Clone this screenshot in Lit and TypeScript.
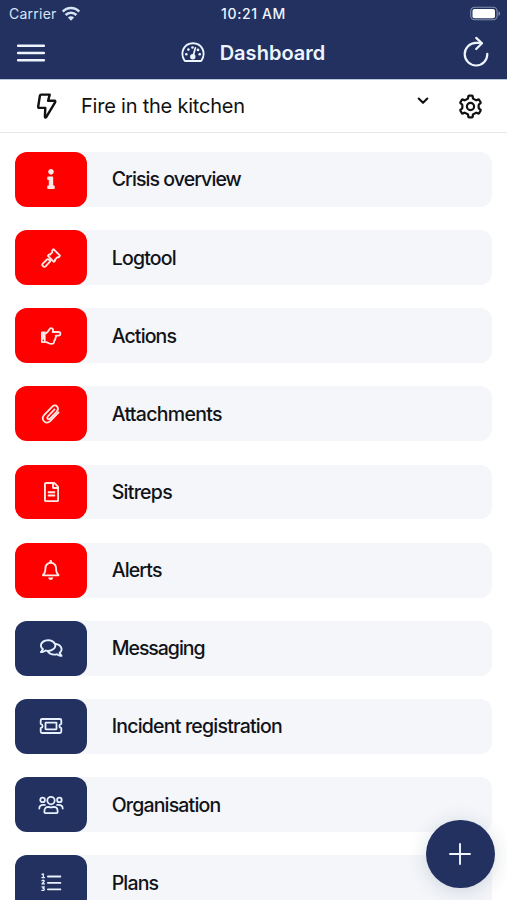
import { LitElement, html, css, svg } from "lit";
import { customElement } from "lit/decorators.js";
import { classMap } from "lit/directives/class-map.js";
import { styleMap } from "lit/directives/style-map.js";

const icons: Record<string, unknown> = {
  info: svg`<svg class="solid" width="8" height="20" viewBox="0 0 192 512"><path d="M20 424.229h20V279.771H20c-11.046 0-20-8.954-20-20V212c0-11.046 8.954-20 20-20h112c11.046 0 20 8.954 20 20v212.229h20c11.046 0 20 8.954 20 20V492c0 11.046-8.954 20-20 20H20c-11.046 0-20-8.954-20-20v-47.771c0-11.046 8.954-20 20-20zM96 0C56.235 0 24 32.235 24 72s32.235 72 72 72 72-32.235 72-72S135.764 0 96 0z"/></svg>`,
  gavel: svg`<svg class="line" width="24" height="24" viewBox="0 0 24 24"><path d="M14.500 3.200 21 9.700 19.600 11.300 18.500 11.100 16 13.700 16.200 14.700 14.900 15.900 8.900 9.800 10 8.500 11.100 8.600 13.400 6.100 13.100 4.800ZM11.100 12 12.900 13.900M9.600 13.400 11.400 15.200 6.600 20.300C4.900 21.800 2.200 19.400 3.800 17.600L8 13.500Q8.800 12.700 9.600 13.400ZM12 12.900 10.500 14.300"/></svg>`,
  hand: svg`<svg class="line" width="24" height="24" viewBox="0 0 24 24"><path d="M7 9.200C9.800 7.700 10.100 4.200 12 4.200 14.300 4.200 14.500 6 13.600 8H19.500C22 8 22 11.700 19.500 11.700H16.700C17.300 12.600 17 13.700 16.200 14.200 16.600 15.200 16.100 16.300 15.200 16.600 15.400 18.600 14.500 19.900 12.600 19.900 9.800 19.900 9.200 18.400 7 18.100"/><path class="fill" d="M2.800 7.600H6.600V18.900H2.800Q2 18.900 2 18V8.500Q2 7.600 2.800 7.600Z"/><circle class="dot-red" cx="4.300" cy="16.400" r=".8"/></svg>`,
  clip: svg`<svg class="line" width="24" height="24" viewBox="0 0 24 24"><path d="m15.500 7.400-6.700 7.100C7.300 16.400 9.300 18.300 11 16.600L17.800 9.500C20.800 6 17.200 1.200 13.300 4.600L5.300 12.900C1.300 17.200 6.600 23.500 11.200 19.100L19.600 10.400"/></svg>`,
  file: svg`<svg class="solid" width="15" height="20" viewBox="0 0 384 512"><path d="M288 248v28c0 6.600-5.400 12-12 12H108c-6.600 0-12-5.400-12-12v-28c0-6.600 5.400-12 12-12h168c6.600 0 12 5.400 12 12zm-12 72H108c-6.600 0-12 5.400-12 12v28c0 6.600 5.400 12 12 12h168c6.600 0 12-5.400 12-12v-28c0-6.600-5.400-12-12-12zm108-188.100V464c0 26.500-21.500 48-48 48H48c-26.500 0-48-21.500-48-48V48C0 21.500 21.500 0 48 0h204.100C264.800 0 277 5.100 286 14.100L369.900 98c9 8.900 14.100 21.200 14.100 33.900zm-128-80V128h76.100L256 51.900zM336 464V176H232c-13.300 0-24-10.700-24-24V48H48v416h288z"/></svg>`,
  bell: svg`<svg class="solid" width="17.500" height="20" viewBox="0 0 448 512"><path d="M439.390 362.290c-19.320-20.760-55.470-51.990-55.470-154.290 0-77.700-54.480-139.900-127.940-155.160V32c0-17.670-14.320-32-31.980-32s-31.980 14.330-31.980 32v20.840C118.560 68.100 64.080 130.300 64.080 208c0 102.300-36.150 133.530-55.470 154.290-6 6.450-8.660 14.160-8.610 21.710.11 16.400 12.980 32 32.100 32h383.800c19.120 0 32-15.600 32.100-32 .05-7.550-2.610-15.270-8.610-21.710zM67.530 368c21.220-27.970 44.420-74.330 44.530-159.420 0-.2-.06-.38-.06-.58 0-61.860 50.140-112 112-112s112 50.140 112 112c0 .2-.06.38-.06.58.11 85.100 23.310 131.460 44.530 159.420H67.530zM224 512c35.320 0 63.970-28.650 63.970-64H160.030c0 35.350 28.650 64 63.970 64z"/></svg>`,
  comments: svg`<svg class="solid" width="22.500" height="20" viewBox="0 0 576 512"><path d="M532 386.200c27.500-27.100 44-61.100 44-98.200 0-80-76.500-146.100-176.200-157.900C368.300 72.500 294.300 32 208 32 93.100 32 0 103.600 0 192c0 37 16.500 71 44 98.200-15.300 30.700-37.300 54.500-37.700 54.900-6.300 6.700-8.100 16.500-4.400 25 3.600 8.500 12 14 21.200 14 53.500 0 96.700-20.200 125.200-38.800 9.200 2.100 18.700 3.700 28.400 4.900C208.100 407.600 281.800 448 368 448c20.800 0 40.800-2.400 59.800-6.800C456.300 459.700 499.400 480 553 480c9.200 0 17.500-5.500 21.200-14 3.600-8.500 1.900-18.300-4.400-25-.4-.3-22.500-24.100-37.800-54.800zm-392.800-92.300L122.100 305c-14.100 9.100-28.500 16.300-43.100 21.400 2.700-4.700 5.400-9.700 8-14.800l15.500-31.100L77.700 256C64.200 242.600 48 220.700 48 192c0-60.700 73.300-112 160-112s160 51.300 160 112-73.300 112-160 112c-16.500 0-33-1.900-49-5.600l-19.800-4.500zM498.300 352l-24.700 24.400 15.500 31.100c2.600 5.100 5.300 10.100 8 14.800-14.600-5.100-29-12.300-43.100-21.400l-17.100-11.100-19.900 4.600c-16 3.700-32.500 5.600-49 5.600-54 0-102.200-20.100-131.300-49.700C338 339.500 416 272.900 416 192c0-3.400-.4-6.700-.7-10C479.700 196.500 528 238.800 528 288c0 28.700-16.200 50.600-29.700 64z"/></svg>`,
  ticket: svg`<svg class="line" width="24" height="24" viewBox="0 0 24 24"><path d="M3.100 5H20.900Q22.300 5 22.300 6.500V9.800C19.800 10.600 19.800 13.400 22.300 14.200V17.500Q22.300 19 20.900 19H3.100Q1.700 19 1.700 17.500V14.200C4.200 13.400 4.200 10.600 1.700 9.800V6.500Q1.700 5 3.100 5Z"/><rect x="6.500" y="8.700" width="11" height="6.600" rx=".5"/></svg>`,
  users: svg`<svg class="line" width="26" height="24" viewBox="0 0 26 24"><circle cx="13" cy="7.600" r="3.700"/><circle cx="4.600" cy="6.900" r="2.300"/><circle cx="21.400" cy="6.900" r="2.300"/><path d="M6.400 19.200V18C6.400 15.300 8.200 13.800 10.400 13.800 12 14.400 14 14.400 15.600 13.800 17.800 13.800 19.600 15.300 19.600 18V19.200Q19.600 20.100 18.600 20.100H7.400Q6.400 20.100 6.400 19.200ZM1.300 15.500C1.300 13 2.700 11.900 5.400 11.900H6.900M24.700 15.500C24.700 13 23.300 11.900 20.600 11.900H19.100"/></svg>`,
  list: svg`<svg class="line" width="24" height="24" viewBox="0 0 24 24"><path d="M8.900 5.500H21.400M8.900 11.900H21.400M8.900 18.300H21.400"/><path class="thin" d="M3.100 3.400 4.300 2.900V6.500M2.900 6.600H5.500M2.900 9.700C4.800 8.600 6 9.800 4.500 11.200L3 12.900H5.500M3 15.900H5.300L4 17.300C6.100 17.200 5.800 20.200 2.800 19.300"/></svg>`,
};

const rows = [
  { icon: "info", label: "Crisis overview", alert: true, tracking: -0.93 },
  { icon: "gavel", label: "Logtool", alert: true, tracking: -0.8 },
  { icon: "hand", label: "Actions", alert: true, tracking: -0.87 },
  { icon: "clip", label: "Attachments", alert: true, tracking: -0.7 },
  { icon: "file", label: "Sitreps", alert: true, tracking: -0.73 },
  { icon: "bell", label: "Alerts", alert: true, tracking: -0.85 },
  { icon: "comments", label: "Messaging", alert: false, tracking: -1.03 },
  { icon: "ticket", label: "Incident registration", alert: false, tracking: -0.78 },
  { icon: "users", label: "Organisation", alert: false, tracking: -0.82 },
  { icon: "list", label: "Plans", alert: false, tracking: -0.85 },
];

/** Outline of a cog centred on the origin. */
function cogPath(teeth: number, outer: number, inner: number): string {
  const step = (Math.PI * 2) / teeth;
  const at = (r: number, a: number) => `${(r * Math.sin(a)).toFixed(2)} ${(-r * Math.cos(a)).toFixed(2)}`;
  let d = "";
  for (let i = 0; i < teeth; i++) {
    const a = i * step;
    d += `${i ? "L" : "M"}${at(inner, a - step * 0.33)}L${at(inner + 0.4, a - step * 0.26)}L${at(outer - 0.5, a - step * 0.21)}Q${at(outer + 0.1, a - step * 0.19)} ${at(outer, a - step * 0.13)}L${at(outer, a + step * 0.13)}Q${at(outer + 0.1, a + step * 0.19)} ${at(outer - 0.5, a + step * 0.21)}L${at(inner + 0.4, a + step * 0.26)}L${at(inner, a + step * 0.33)}`;
  }
  return d + "Z";
}

@customElement("app-root")
export class AppRoot extends LitElement {
  static styles = css`
    :host { display: flex; flex-direction: column; position: relative; box-sizing: border-box; width: 507px; height: 900px; overflow: hidden; background: #fff; color: #111318; font-family: Inter, "Liberation Sans", sans-serif; }
    svg { display: block; flex: none; overflow: visible; }
    .header { flex: none; height: 79px; background: #22315f; color: #eef5ff; box-sizing: border-box; }
    .status { display: grid; grid-template-columns: 1fr auto 1fr; align-items: center; height: 27px; padding: 0 6px 0 9px; font-size: 14px; }
    .carrier { display: flex; align-items: center; gap: 5px; letter-spacing: .24px; color: #d8e4f5; }
    .clock { font-weight: 500; font-size: 14px; letter-spacing: .6px; margin: 0 3px 0 0; }
    .battery { justify-self: end; }
    .bar { display: grid; grid-template-columns: 1fr auto 1fr; align-items: center; height: 51px; padding: 0 18px 0 17px; }
    .title { display: flex; align-items: center; gap: 15px; font-size: 20px; font-weight: 600; letter-spacing: .03px; }
    .title svg { margin-bottom: 2px; }
    .reload { justify-self: end; margin-bottom: 1px; }
    .stroke { fill: none; stroke: currentColor; stroke-linecap: round; stroke-linejoin: round; }
    .butt { stroke-linecap: butt; }
    .incident { flex: none; display: flex; align-items: center; box-sizing: border-box; height: 54px; padding: 0 24px 0 36px; border-top: 1px solid #b9c9dc; border-bottom: 1px solid #e7e7e7; color: #111; }
    .incident-name { flex: 1; margin-left: 23px; font-size: 20px; letter-spacing: -.22px; }
    .chevron { margin: -10px 29px 0 0; }
    .list { flex: none; display: flex; flex-direction: column; gap: 23.350px; padding: 19px 15px 0 15px; }
    .row { display: flex; align-items: center; height: 54.800px; border-radius: 12px; background: #f4f6fa; }
    .tile { display: flex; align-items: center; justify-content: center; width: 72.400px; height: 100%; border-radius: 12px; background: #22315f; color: #e8f1ff; }
    .tile.alert { background: #fe0000; color: #ffe9e6; }
    .label { margin-left: 24.300px; font-size: 19.500px; font-weight: 500; white-space: nowrap; }
    .solid { fill: currentColor; }
    .line { fill: none; stroke: currentColor; stroke-width: 1.800; stroke-linecap: round; stroke-linejoin: round; }
    .thin { stroke-width: 1.300; }
    .fill { fill: currentColor; stroke: none; }
    .dot-red { fill: #fe0000; stroke: none; }
    .fab { position: absolute; right: 12.500px; bottom: 12px; display: flex; align-items: center; justify-content: center; width: 68.500px; height: 68.500px; border-radius: 50%; background: #22315f; color: #f2f7ff; box-shadow: 0 3px 20px rgba(20, 35, 60, .16); }
  `;

  render() {
    return html`
      <div class="header">
        <div class="status">
          <div class="carrier"><span>Carrier</span>
            <svg width="18" height="14" viewBox="0 0 18 14"><path class="stroke butt" stroke-width="2.500" d="M.8 4.600C5.300-.2 12.700-.2 17.200 4.600M3.600 8C6.700 4.900 11.300 4.900 14.400 8"/><path fill="currentColor" d="M9 13.800 5.900 10.500C7.600 8.900 10.400 8.900 12.100 10.500Z"/></svg>
          </div>
          <div class="clock">10:21 AM</div>
          <svg class="battery" width="31" height="14" viewBox="0 0 31 14"><rect x=".7" y=".2" width="26.400" height="12.600" rx="4" fill="none" stroke="#8290b0" stroke-width="1.100"/><rect x="2.500" y="1.900" width="22.500" height="9.300" rx="2" fill="#fff"/><path d="M28.500 4.200C30.600 5 30.600 8 28.500 8.800Z" fill="#8290b0"/></svg>
        </div>
        <div class="bar">
          <svg width="28" height="18" viewBox="0 0 28 18"><path class="stroke" stroke-width="2.400" d="M1.100 1.800H26.900M1.100 9H26.900M1.100 16.200H26.900"/></svg>
          <div class="title">
            <svg width="24" height="20" viewBox="0 0 24 20"><path class="stroke" stroke-width="1.900" d="M3.500 18.500C-1.600 10.300 3.300 1.200 12 1.200S25.600 10.300 20.500 18.500Q20.200 19 19.500 19H4.500Q3.800 19 3.500 18.500Z"/><path class="stroke" stroke-width="1.700" d="M14.400 5.800 12.300 13.500"/><circle cx="11.800" cy="14.800" r="2.700" fill="currentColor"/><g fill="currentColor"><circle cx="5.300" cy="12.200" r="1.300"/><circle cx="7.400" cy="7.600" r="1.300"/><circle cx="11.500" cy="5.500" r="1.300"/><circle cx="17" cy="7.900" r="1.300"/><circle cx="18.700" cy="12.200" r="1.300"/></g></svg>
            <span>Dashboard</span>
          </div>
          <svg class="reload" width="26" height="30" viewBox="0 0 26 30"><path class="stroke" stroke-width="2.200" d="M24.300 16.800A11.300 11.300 0 1 1 13 5.900H18.800M13.200.9 19 6.300 13.200 12"/></svg>
        </div>
      </div>
      <div class="incident">
        <svg width="22" height="26" viewBox="0 0 22 26"><path class="stroke" stroke-width="2.400" d="M5.200 1.600H13.700L12.100 7.800H18.500Q19.700 7.900 19.100 9.300L10.200 24.200Q9.100 25.200 8.900 23.700L9.300 14.900H3.200Q2 14.800 2.200 13.500L3.900 2.800Q4.100 1.600 5.200 1.600Z"/></svg>
        <span class="incident-name">Fire in the kitchen</span>
        <svg class="chevron" width="12" height="8" viewBox="0 0 12 8"><path class="stroke" stroke-width="2.100" d="M1.700 1.500 6 5.800 10.300 1.500"/></svg>
        <svg width="25" height="25" viewBox="-12.500 -12.500 25 25"><path class="stroke" stroke-width="2.200" d=${cogPath(6, 10.9, 8.3)}/><circle class="stroke" stroke-width="2.200" r="3.600"/></svg>
      </div>
      <div class="list">
        ${rows.map((r) => html`<div class="row"><div class=${classMap({ tile: true, alert: r.alert })}>${icons[r.icon]}</div><span class="label" style=${styleMap({ letterSpacing: `${r.tracking}px` })}>${r.label}</span></div>`)}
      </div>
      <div class="fab"><svg width="22" height="22" viewBox="0 0 22 22"><path class="stroke" stroke-width="1.900" d="M11 1V21M1 11H21"/></svg></div>
    `;
  }
}
